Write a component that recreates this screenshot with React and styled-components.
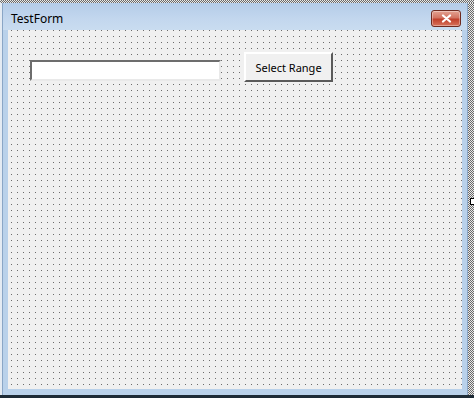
import React from "react";
import styled, { createGlobalStyle } from "styled-components";

const GlobalStyle = createGlobalStyle`
  html, body {
    margin: 0;
    padding: 0;
    background: #1d2b36;
  }
  #root {
    width: 474px;
    height: 398px;
    overflow: hidden;
  }
`;

const hatch = `
  background-color: #d8d8d8;
  background-image: repeating-conic-gradient(#6a6a6a 0% 25%, #e8e8e8 0% 50%);
  background-size: 2px 2px;
`;

const Screen = styled.div`
  width: 474px;
  height: 398px;
  display: flex;
  flex-direction: column;
  background: #1d2b36;
  font-family: "Noto Sans", "Open Sans", sans-serif;
`;

const TopHatch = styled.div`
  height: 3px;
  flex-shrink: 0;
  ${hatch}
`;

const Middle = styled.div`
  height: 392px;
  display: flex;
  flex-shrink: 0;
`;

const SideHatch = styled.div`
  width: ${(p) => p.$w}px;
  flex-shrink: 0;
  position: relative;
  ${(p) => (p.$plain ? "background: #e4ebf3;" : hatch)}
`;

const Handle = styled.div`
  position: absolute;
  left: 2px;
  top: 195px;
  width: 5px;
  height: 5px;
  background: #ffffff;
  border: 1px solid #000000;
`;

const Window = styled.div`
  flex: 1;
  display: flex;
  flex-direction: column;
  background: #b9d1ea;
  border-left: 1px solid #8aa6c6;
  border-right: 1px solid #8aa6c6;
`;

const TitleBar = styled.div`
  height: 27px;
  display: flex;
  align-items: center;
  justify-content: space-between;
  padding: 0 6px 0 8px;
  background: linear-gradient(#b4cce8, #c3d7ee 60%, #c9dcf0);
`;

const Title = styled.span`
  font-size: 12px;
  color: #000000;
  margin-top: 3px;
`;

const CloseButton = styled.div`
  width: 28px;
  height: 15px;
  margin-top: 3px;
  border: 1px solid #6e2a20;
  border-radius: 3px;
  background: linear-gradient(#e3a292, #d27462 45%, #c0402c 55%, #d8735c);
  display: flex;
  align-items: center;
  justify-content: center;
  box-shadow: inset 0 0 0 1px rgba(255, 255, 255, 0.35);
`;

const Body = styled.div`
  flex: 1;
  display: flex;
  padding: 0 5px 6px 5px;
`;

const Client = styled.div`
  flex: 1;
  display: flex;
  align-items: flex-start;
  gap: 23px;
  padding: 22px 0 0 22px;
  background-color: #f0f0f0;
  background-image: linear-gradient(90deg, #f0f0f0 5px, transparent 5px),
    linear-gradient(#f0f0f0 5px, #6c6c6c 5px);
  background-size: 6px 6px;
  background-position: -2px 1px;
`;

const TextBox = styled.div`
  margin-top: 8px;
  width: 187px;
  height: 17px;
  background: #ffffff;
  border-top: 2px solid #6d6d6d;
  border-left: 2px solid #6d6d6d;
  border-bottom: 2px solid #e9e9e9;
  border-right: 2px solid #e9e9e9;
`;

const Button = styled.div`
  width: 85px;
  height: 26px;
  display: flex;
  align-items: center;
  justify-content: center;
  background: #f0f0f0;
  border-top: 2px solid #ffffff;
  border-left: 2px solid #ffffff;
  border-bottom: 2px solid #5a5a5a;
  border-right: 2px solid #5a5a5a;
  font-size: 11px;
  color: #000000;
`;

export default function App() {
  return (
    <>
      <GlobalStyle />
      <Screen>
        <TopHatch />
        <Middle>
          <SideHatch $w={2} $plain />
          <Window>
            <TitleBar>
              <Title>TestForm</Title>
              <CloseButton>
                <svg width="11" height="9" viewBox="0 0 11 9">
                  <path
                    d="M2 1.5 L9 7.5 M9 1.5 L2 7.5"
                    stroke="#ffffff"
                    strokeWidth="2.2"
                    strokeLinecap="round"
                  />
                </svg>
              </CloseButton>
            </TitleBar>
            <Body>
              <Client>
                <TextBox />
                <Button>Select Range</Button>
              </Client>
            </Body>
          </Window>
          <SideHatch $w={6}>
            <Handle />
          </SideHatch>
        </Middle>
      </Screen>
    </>
  );
}
